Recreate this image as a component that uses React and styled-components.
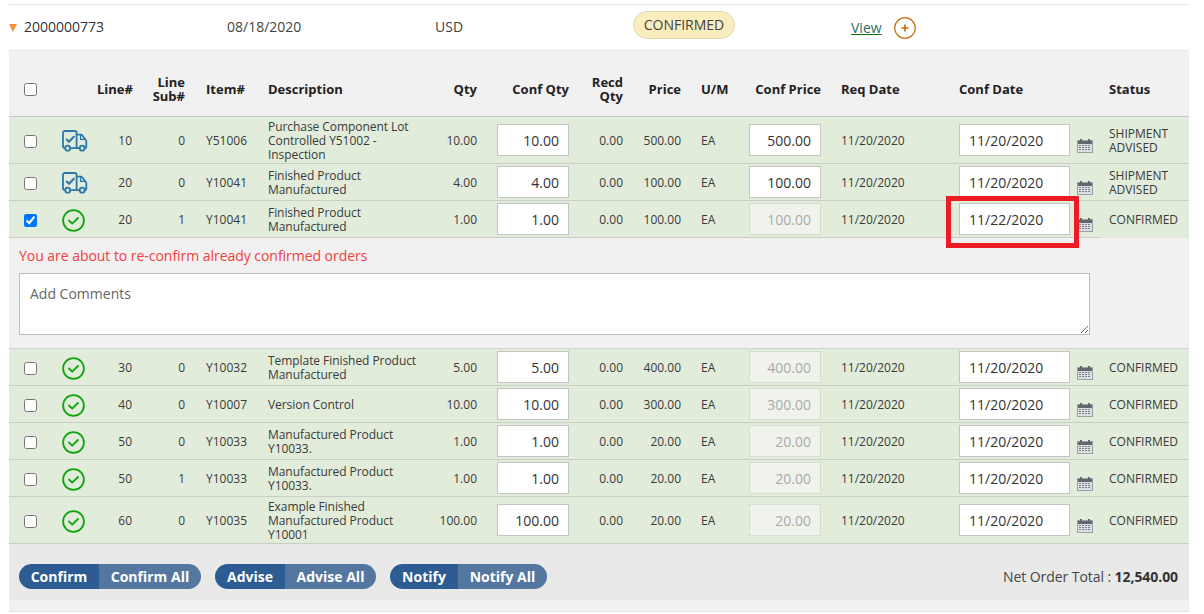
import React from 'react';
import styled, { createGlobalStyle } from 'styled-components';

const COLUMNS = '45px 43px 35px 53px 83px 160px 49px 92px 54px 58px 68px 72px 138px 150px 80px';

const lines = [
  { id: 1, check: false, icon: 'truck', line: 10, sub: 0, item: 'Y51006', desc: 'Purchase Component Lot Controlled Y51002 - Inspection', qty: '10.00', price: '500.00', date: '11/20/2020', status: 'SHIPMENT ADVISED', tall: true },
  { id: 2, check: false, icon: 'truck', line: 20, sub: 0, item: 'Y10041', desc: 'Finished Product Manufactured', qty: '4.00', price: '100.00', date: '11/20/2020', status: 'SHIPMENT ADVISED' },
  { id: 3, check: true, icon: 'ok', line: 20, sub: 1, item: 'Y10041', desc: 'Finished Product Manufactured', qty: '1.00', price: '100.00', locked: true, date: '11/22/2020', status: 'CONFIRMED', marked: true },
  { id: 4, icon: 'ok', line: 30, sub: 0, item: 'Y10032', desc: 'Template Finished Product Manufactured', qty: '5.00', price: '400.00', locked: true, date: '11/20/2020', status: 'CONFIRMED' },
  { id: 5, icon: 'ok', line: 40, sub: 0, item: 'Y10007', desc: 'Version Control', qty: '10.00', price: '300.00', locked: true, date: '11/20/2020', status: 'CONFIRMED' },
  { id: 6, icon: 'ok', line: 50, sub: 0, item: 'Y10033', desc: 'Manufactured Product Y10033.', qty: '1.00', price: '20.00', locked: true, date: '11/20/2020', status: 'CONFIRMED' },
  { id: 7, icon: 'ok', line: 50, sub: 1, item: 'Y10033', desc: 'Manufactured Product Y10033.', qty: '1.00', price: '20.00', locked: true, date: '11/20/2020', status: 'CONFIRMED' },
  { id: 8, icon: 'ok', line: 60, sub: 0, item: 'Y10035', desc: 'Example Finished Manufactured Product Y10001', qty: '100.00', price: '20.00', locked: true, date: '11/20/2020', status: 'CONFIRMED', tall: true },
];

const GlobalStyle = createGlobalStyle`
  html, body { margin: 0; background: #fff; }
  body { font-family: "Open Sans", "Liberation Sans", sans-serif; color: #333; }
`;

const Page = styled.div`
  width: 1180px;
  padding: 4px 15px 0 9px;
`;

const OrderRow = styled.div`
  display: grid;
  grid-template-columns: 15px 203px 208px 198px 218px 43px 1fr;
  align-items: center;
  height: 43px;
  padding-bottom: 2px;
  border-top: 1px solid #e6e6e6;
  border-bottom: 1px solid #e6e6e6;
  font-size: 14px;
  color: #444;
`;

const Caret = styled.span`
  width: 0;
  height: 0;
  border-left: 4px solid transparent;
  border-right: 4px solid transparent;
  border-top: 8px solid #ef9138;
  margin-top: 2px;
`;

const OrderNo = styled.span`
  color: #333;
`;

const Pill = styled.span`
  justify-self: start;
  box-sizing: border-box;
  width: 102px;
  height: 28px;
  margin-top: -3px;
  border: 1px solid #ddd7b5;
  border-radius: 14px;
  background: #f9edbd;
  text-align: center;
  line-height: 26px;
  color: #444;
`;

const ViewLink = styled.a`
  color: #2b6e6a;
  text-decoration: underline;
  text-decoration-color: #0a6b0a;
  margin-top: 2px;
`;

const PlusSlot = styled.span`
  display: flex;
  margin-top: 2px;
`;

const Panel = styled.div`
  background: #f1f1f1;
  border-bottom: 1px solid #e3e3e3;
  padding-bottom: 11px;
`;

const HeadRow = styled.div`
  display: grid;
  grid-template-columns: ${COLUMNS};
  align-items: center;
  height: 55px;
  padding-top: 10px;
  border-bottom: 1px solid #c8c8c8;
  font-size: 13px;
  font-weight: 700;
  line-height: 14px;
  color: #222;
`;

const Cell = styled.div`
  text-align: ${(p) => (p.$right ? 'right' : 'left')};
  padding-left: ${(p) => p.$inset || 0}px;
`;

const Description = styled(Cell)`
  letter-spacing: -0.06px;
`;

const LineRow = styled.div`
  display: grid;
  grid-template-columns: ${COLUMNS};
  align-items: center;
  height: ${(p) => (p.$tall ? 46 : 36)}px;
  background: #e2ecdb;
  border-bottom: 1px solid #c8cdc5;
  font-size: 12px;
  line-height: 14px;
  color: #3a3a3a;
  ${(p) => p.$short && 'border-image: linear-gradient(to right, #c8cdc5 1091px, transparent 1091px) 1;'}
  ${Cell} { padding-top: 2px; }
`;

const Tick = styled.input.attrs({ type: 'checkbox', readOnly: true })`
  display: block;
  width: 13px;
  height: 13px;
  margin: 2px 0 0 15px;
`;

const IconSlot = styled.div`
  display: flex;
  padding: 2px 0 0 8px;
`;

const FieldCell = styled.div`
  position: relative;
  display: flex;
  padding-left: ${(p) => p.$inset || 0}px;
`;

const Field = styled.input`
  box-sizing: border-box;
  width: ${(p) => p.$width}px;
  height: 32px;
  padding: 0 ${(p) => (p.$date ? 0 : 9)}px 0 ${(p) => (p.$date ? 9 : 0)}px;
  border: 1px solid ${(p) => (p.disabled ? '#d8ddd4' : '#c4c4c4')};
  background: ${(p) => (p.disabled ? '#eff3ec' : '#fff')};
  color: ${(p) => (p.disabled ? '#aaa' : '#333')};
  font-family: inherit;
  font-size: 14px;
  text-align: ${(p) => (p.$date ? 'left' : 'right')};
  outline: none;
  opacity: 1;
`;

const CalendarSlot = styled.span`
  display: flex;
  margin: 15px 0 0 7px;
`;

const RedBox = styled.span`
  position: absolute;
  left: -13px;
  top: -7px;
  width: 133px;
  height: 52px;
  box-sizing: border-box;
  border: 5px solid #ed1c24;
  pointer-events: none;
  z-index: 2;
`;

const CommentBlock = styled.div`
  box-sizing: border-box;
  height: 111px;
  padding: 8px 0 0 10px;
  border-bottom: 1px solid #d2d2d2;
`;

const Warning = styled.div`
  font-size: 14px;
  line-height: 19px;
  letter-spacing: -0.04px;
  color: #f0403c;
  margin-bottom: 8px;
`;

const Comments = styled.textarea`
  display: block;
  box-sizing: border-box;
  width: 1071px;
  height: 62px;
  padding: 10px;
  border: 1px solid #bdbdbd;
  background: #fff;
  font-family: inherit;
  font-size: 14px;
  line-height: 19px;
  outline: none;
  &::placeholder { color: #666; opacity: 1; }
`;

const Footer = styled.div`
  display: flex;
  align-items: center;
  height: 56px;
  padding: 0 11px 0 10px;
  background: #e9e9e9;
  box-sizing: border-box;
`;

const ButtonGroup = styled.div`
  display: flex;
  height: 25px;
  margin: 9px 14px 0 0;
  border-radius: 13px;
  overflow: hidden;
`;

const Action = styled.button`
  width: ${(p) => p.$width}px;
  padding: 0;
  border: 0;
  background: ${(p) => (p.$all ? '#54779f' : '#2d5c92')};
  color: #fff;
  font-family: inherit;
  font-size: 14px;
  font-weight: 700;
`;

const Total = styled.div`
  margin: 8px 0 0 auto;
  font-size: 14px;
  letter-spacing: -0.07px;
  color: #444;
  b { color: #333; }
`;

const Truck = () => (
  <svg width="26" height="22" viewBox="0 0 26 22" fill="none" stroke="#2c78ad" strokeWidth="1.8" strokeLinecap="round" strokeLinejoin="round">
    <path d="M3.2 18.2H2.8A1.8 1.8 0 0 1 1 16.4V2.8A1.8 1.8 0 0 1 2.8 1h10a1.8 1.8 0 0 1 1.8 1.8V18" />
    <path d="M8.2 18.2h9.5M14.6 4.6H19a1.5 1.5 0 0 1 1.2.6l3.7 5a2 2 0 0 1 .4 1.2v5.2a1.6 1.6 0 0 1-1.6 1.6h-.1" />
    <path d="M18.6 5.4v4h4.6" strokeWidth="1.3" />
    <circle cx="5.7" cy="18.2" r="2.5" />
    <circle cx="20.2" cy="18.2" r="2.5" />
    <path d="M4.8 9.6L7 11.8l4.8-5" strokeWidth="2.1" />
  </svg>
);

const CheckCircle = () => (
  <svg width="23" height="23" viewBox="0 0 23 23" fill="none" stroke="#0fa50f" strokeLinecap="round" strokeLinejoin="round">
    <circle cx="11.5" cy="11.5" r="10.4" strokeWidth="1.8" />
    <path d="M7 11.5l3.2 3.2L16 9" strokeWidth="1.8" />
  </svg>
);

const Calendar = () => (
  <svg width="16" height="14" viewBox="0 0 16 14">
    <rect x="0" y="1" width="16" height="13" fill="#9a9fa3" />
    <rect x="1" y="2" width="14" height="3" fill="#63676b" />
    <rect x="3" y="0" width="2" height="3" fill="#63676b" />
    <rect x="11" y="0" width="2" height="3" fill="#63676b" />
    <rect x="1" y="5" width="14" height="8" fill="#dcdfe1" />
    {[6, 8, 10].map((y) =>
      [2, 5, 8, 11].map((x) => <rect key={`${x}-${y}`} x={x} y={y} width="2" height="1" fill="#7d8186" />)
    )}
  </svg>
);

const PlusCircle = () => (
  <svg width="22" height="22" viewBox="0 0 22 22" fill="none" stroke="#c8700f">
    <circle cx="11" cy="11" r="10.3" strokeWidth="1.2" />
    <path d="M7.4 11h7.2M11 7.4v7.2" strokeWidth="1.7" />
  </svg>
);

const Line = ({ row }) => (
  <LineRow $tall={row.tall} $short={row.marked}>
    <div><Tick checked={!!row.check} /></div>
    <IconSlot>{row.icon === 'truck' ? <Truck /> : <CheckCircle />}</IconSlot>
    <Cell $right>{row.line}</Cell>
    <Cell $right>{row.sub}</Cell>
    <Cell $inset={21}>{row.item}</Cell>
    <Description>{row.desc}</Description>
    <Cell $right>{row.qty}</Cell>
    <FieldCell $inset={20}><Field $width={72} defaultValue={row.qty} /></FieldCell>
    <Cell $right>0.00</Cell>
    <Cell $right>{row.price}</Cell>
    <Cell $inset={20}>EA</Cell>
    <FieldCell><Field $width={72} defaultValue={row.price} disabled={row.locked} /></FieldCell>
    <Cell $inset={20}>11/20/2020</Cell>
    <FieldCell>
      <Field $width={111} $date defaultValue={row.date} />
      <CalendarSlot><Calendar /></CalendarSlot>
      {row.marked && <RedBox />}
    </FieldCell>
    <Cell>{row.status}</Cell>
  </LineRow>
);

const App = () => (
  <Page>
    <GlobalStyle />
    <OrderRow>
      <Caret />
      <OrderNo>2000000773</OrderNo>
      <span>08/18/2020</span>
      <span>USD</span>
      <Pill>CONFIRMED</Pill>
      <ViewLink href="#">View</ViewLink>
      <PlusSlot><PlusCircle /></PlusSlot>
    </OrderRow>
    <Panel>
      <HeadRow>
        <div><Tick /></div>
        <div />
        <Cell $right>Line#</Cell>
        <Cell $right>Line<br />Sub#</Cell>
        <Cell $inset={21}>Item#</Cell>
        <Cell>Description</Cell>
        <Cell $right>Qty</Cell>
        <Cell $right>Conf Qty</Cell>
        <Cell $right>Recd<br />Qty</Cell>
        <Cell $right>Price</Cell>
        <Cell $inset={20}>U/M</Cell>
        <Cell $right>Conf Price</Cell>
        <Cell $inset={20}>Req Date</Cell>
        <Cell>Conf Date</Cell>
        <Cell>Status</Cell>
      </HeadRow>
      {lines.slice(0, 3).map((row) => <Line key={row.id} row={row} />)}
      <CommentBlock>
        <Warning>You are about to re-confirm already confirmed orders</Warning>
        <Comments placeholder="Add Comments" />
      </CommentBlock>
      {lines.slice(3).map((row) => <Line key={row.id} row={row} />)}
      <Footer>
        <ButtonGroup>
          <Action $width={80}>Confirm</Action>
          <Action $all $width={102}>Confirm All</Action>
        </ButtonGroup>
        <ButtonGroup>
          <Action $width={70}>Advise</Action>
          <Action $all $width={91}>Advise All</Action>
        </ButtonGroup>
        <ButtonGroup>
          <Action $width={68}>Notify</Action>
          <Action $all $width={89}>Notify All</Action>
        </ButtonGroup>
        <Total>Net Order Total : <b>12,540.00</b></Total>
      </Footer>
    </Panel>
  </Page>
);

export default App;
